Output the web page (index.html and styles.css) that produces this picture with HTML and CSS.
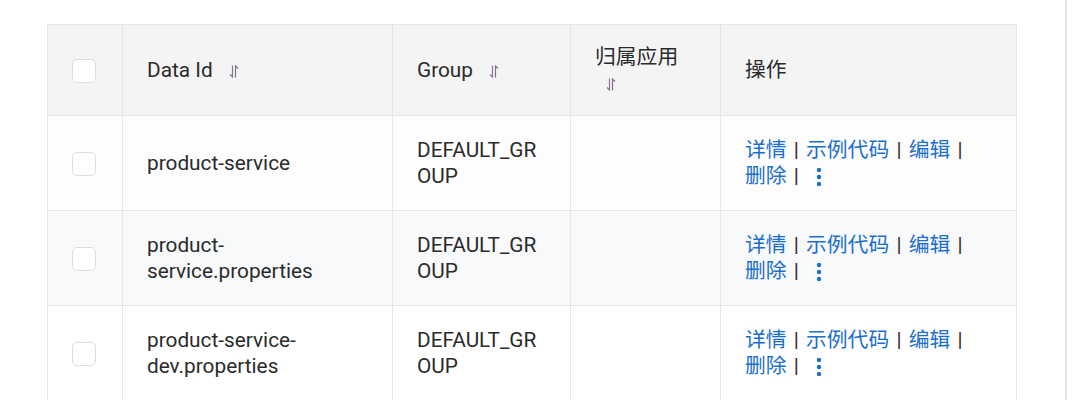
FILE: index.html
```html
<!DOCTYPE html>
<html lang="zh">
<head>
<meta charset="utf-8">
<link rel="stylesheet" href="styles.css">
</head>
<body>
<div class="page">
  <table class="grid">
    <colgroup>
      <col class="c-check"><col class="c-id"><col class="c-group"><col class="c-app"><col class="c-ops">
    </colgroup>
    <thead>
      <tr>
        <th class="check-cell"><span class="checkbox"></span></th>
        <th>Data Id <span class="sort"><svg width="10" height="13" viewBox="0 0 10 13"><path d="M3.5 0.5V12L1 9.5" fill="none" stroke="#8a7890" stroke-width="1.2"/><path d="M6.5 12.5V1L9 3.5" fill="none" stroke="#84708e" stroke-width="1.2"/></svg></span></th>
        <th>Group <span class="sort"><svg width="10" height="13" viewBox="0 0 10 13"><path d="M3.5 0.5V12L1 9.5" fill="none" stroke="#8a7890" stroke-width="1.2"/><path d="M6.5 12.5V1L9 3.5" fill="none" stroke="#84708e" stroke-width="1.2"/></svg></span></th>
        <th class="top">归属应用 <span class="sort"><svg width="10" height="13" viewBox="0 0 10 13"><path d="M3.5 0.5V12L1 9.5" fill="none" stroke="#8a7890" stroke-width="1.2"/><path d="M6.5 12.5V1L9 3.5" fill="none" stroke="#84708e" stroke-width="1.2"/></svg></span></th>
        <th>操作</th>
      </tr>
    </thead>
    <tbody>
      <tr class="r1">
        <td class="check-cell"><span class="checkbox"></span></td>
        <td>product-service</td>
        <td class="brk">DEFAULT_GROUP</td>
        <td></td>
        <td class="ops"><a>详情</a> <span class="sep">|</span> <a>示例代码</a> <span class="sep">|</span> <a>编辑</a> <span class="sep">|</span> <a>删除</a> <span class="sep">|</span><span class="more"><svg width="6" height="20" viewBox="0 0 6 20"><circle cx="3" cy="3" r="2.2" fill="#1a6fd0"/><circle cx="3" cy="10" r="2.2" fill="#1a6fd0"/><circle cx="3" cy="17" r="2.2" fill="#1a6fd0"/></svg></span></td>
      </tr>
      <tr class="r2">
        <td class="check-cell"><span class="checkbox"></span></td>
        <td>product-service.properties</td>
        <td class="brk">DEFAULT_GROUP</td>
        <td></td>
        <td class="ops"><a>详情</a> <span class="sep">|</span> <a>示例代码</a> <span class="sep">|</span> <a>编辑</a> <span class="sep">|</span> <a>删除</a> <span class="sep">|</span><span class="more"><svg width="6" height="20" viewBox="0 0 6 20"><circle cx="3" cy="3" r="2.2" fill="#1a6fd0"/><circle cx="3" cy="10" r="2.2" fill="#1a6fd0"/><circle cx="3" cy="17" r="2.2" fill="#1a6fd0"/></svg></span></td>
      </tr>
      <tr class="r3">
        <td class="check-cell"><span class="checkbox"></span></td>
        <td>product-service-dev.properties</td>
        <td class="brk">DEFAULT_GROUP</td>
        <td></td>
        <td class="ops"><a>详情</a> <span class="sep">|</span> <a>示例代码</a> <span class="sep">|</span> <a>编辑</a> <span class="sep">|</span> <a>删除</a> <span class="sep">|</span><span class="more"><svg width="6" height="20" viewBox="0 0 6 20"><circle cx="3" cy="3" r="2.2" fill="#1a6fd0"/><circle cx="3" cy="10" r="2.2" fill="#1a6fd0"/><circle cx="3" cy="17" r="2.2" fill="#1a6fd0"/></svg></span></td>
      </tr>
    </tbody>
  </table>
</div>
</body>
</html>
```

FILE: styles.css
```css
html, body {
  margin: 0;
  padding: 0;
  background: #ffffff;
}
body {
  font-family: Roboto, "Noto Sans CJK SC", sans-serif;
  font-size: 20.8px;
  line-height: 26px;
  color: #2b2b2b;
  overflow: hidden;
}
.page {
  width: 1018px;
  height: 400px;
  padding: 24px 0 0 47px;
  border-right: 2px solid #e4e4e4;
  box-sizing: content-box;
}
.grid {
  width: 969px;
  table-layout: fixed;
  border-collapse: collapse;
}
.c-check { width: 75px; }
.c-id { width: 270px; }
.c-group { width: 178px; }
.c-app { width: 150px; }
.c-ops { width: 296px; }
.grid th, .grid td {
  border: 1px solid #e6e6e6;
  padding: 21px 24px 21px 24px;
  text-align: left;
  vertical-align: middle;
  font-weight: normal;
  overflow-wrap: break-word;
}
.grid th {
  background: #f4f4f4;
  padding-top: 19px;
  padding-bottom: 19px;
}
.grid th.top {
  vertical-align: top;
}
.check-cell {
  text-align: center !important;
  padding-left: 0 !important;
  padding-right: 2px !important;
}
.checkbox {
  display: inline-block;
  width: 22px;
  height: 22px;
  border: 1px solid #dcdcdc;
  border-radius: 5px;
  background: #ffffff;
  vertical-align: middle;
}
.sort {
  display: inline-block;
  margin-left: 11px;
  vertical-align: -1px;
}
.sort svg { display: block; }
.brk { word-break: break-all; }
.r1 td { background: #fdfdfd; }
.r2 td { background: #f8f9fa; }
.r3 td { background: #ffffff; }
.ops a {
  color: #1a6fd0;
  white-space: nowrap;
}
.sep {
  color: #3a2a2a;
  margin: 0 2px;
}
.more {
  display: inline-block;
  margin-left: 15px;
  vertical-align: -4px;
}
.more svg { display: block; }
```
